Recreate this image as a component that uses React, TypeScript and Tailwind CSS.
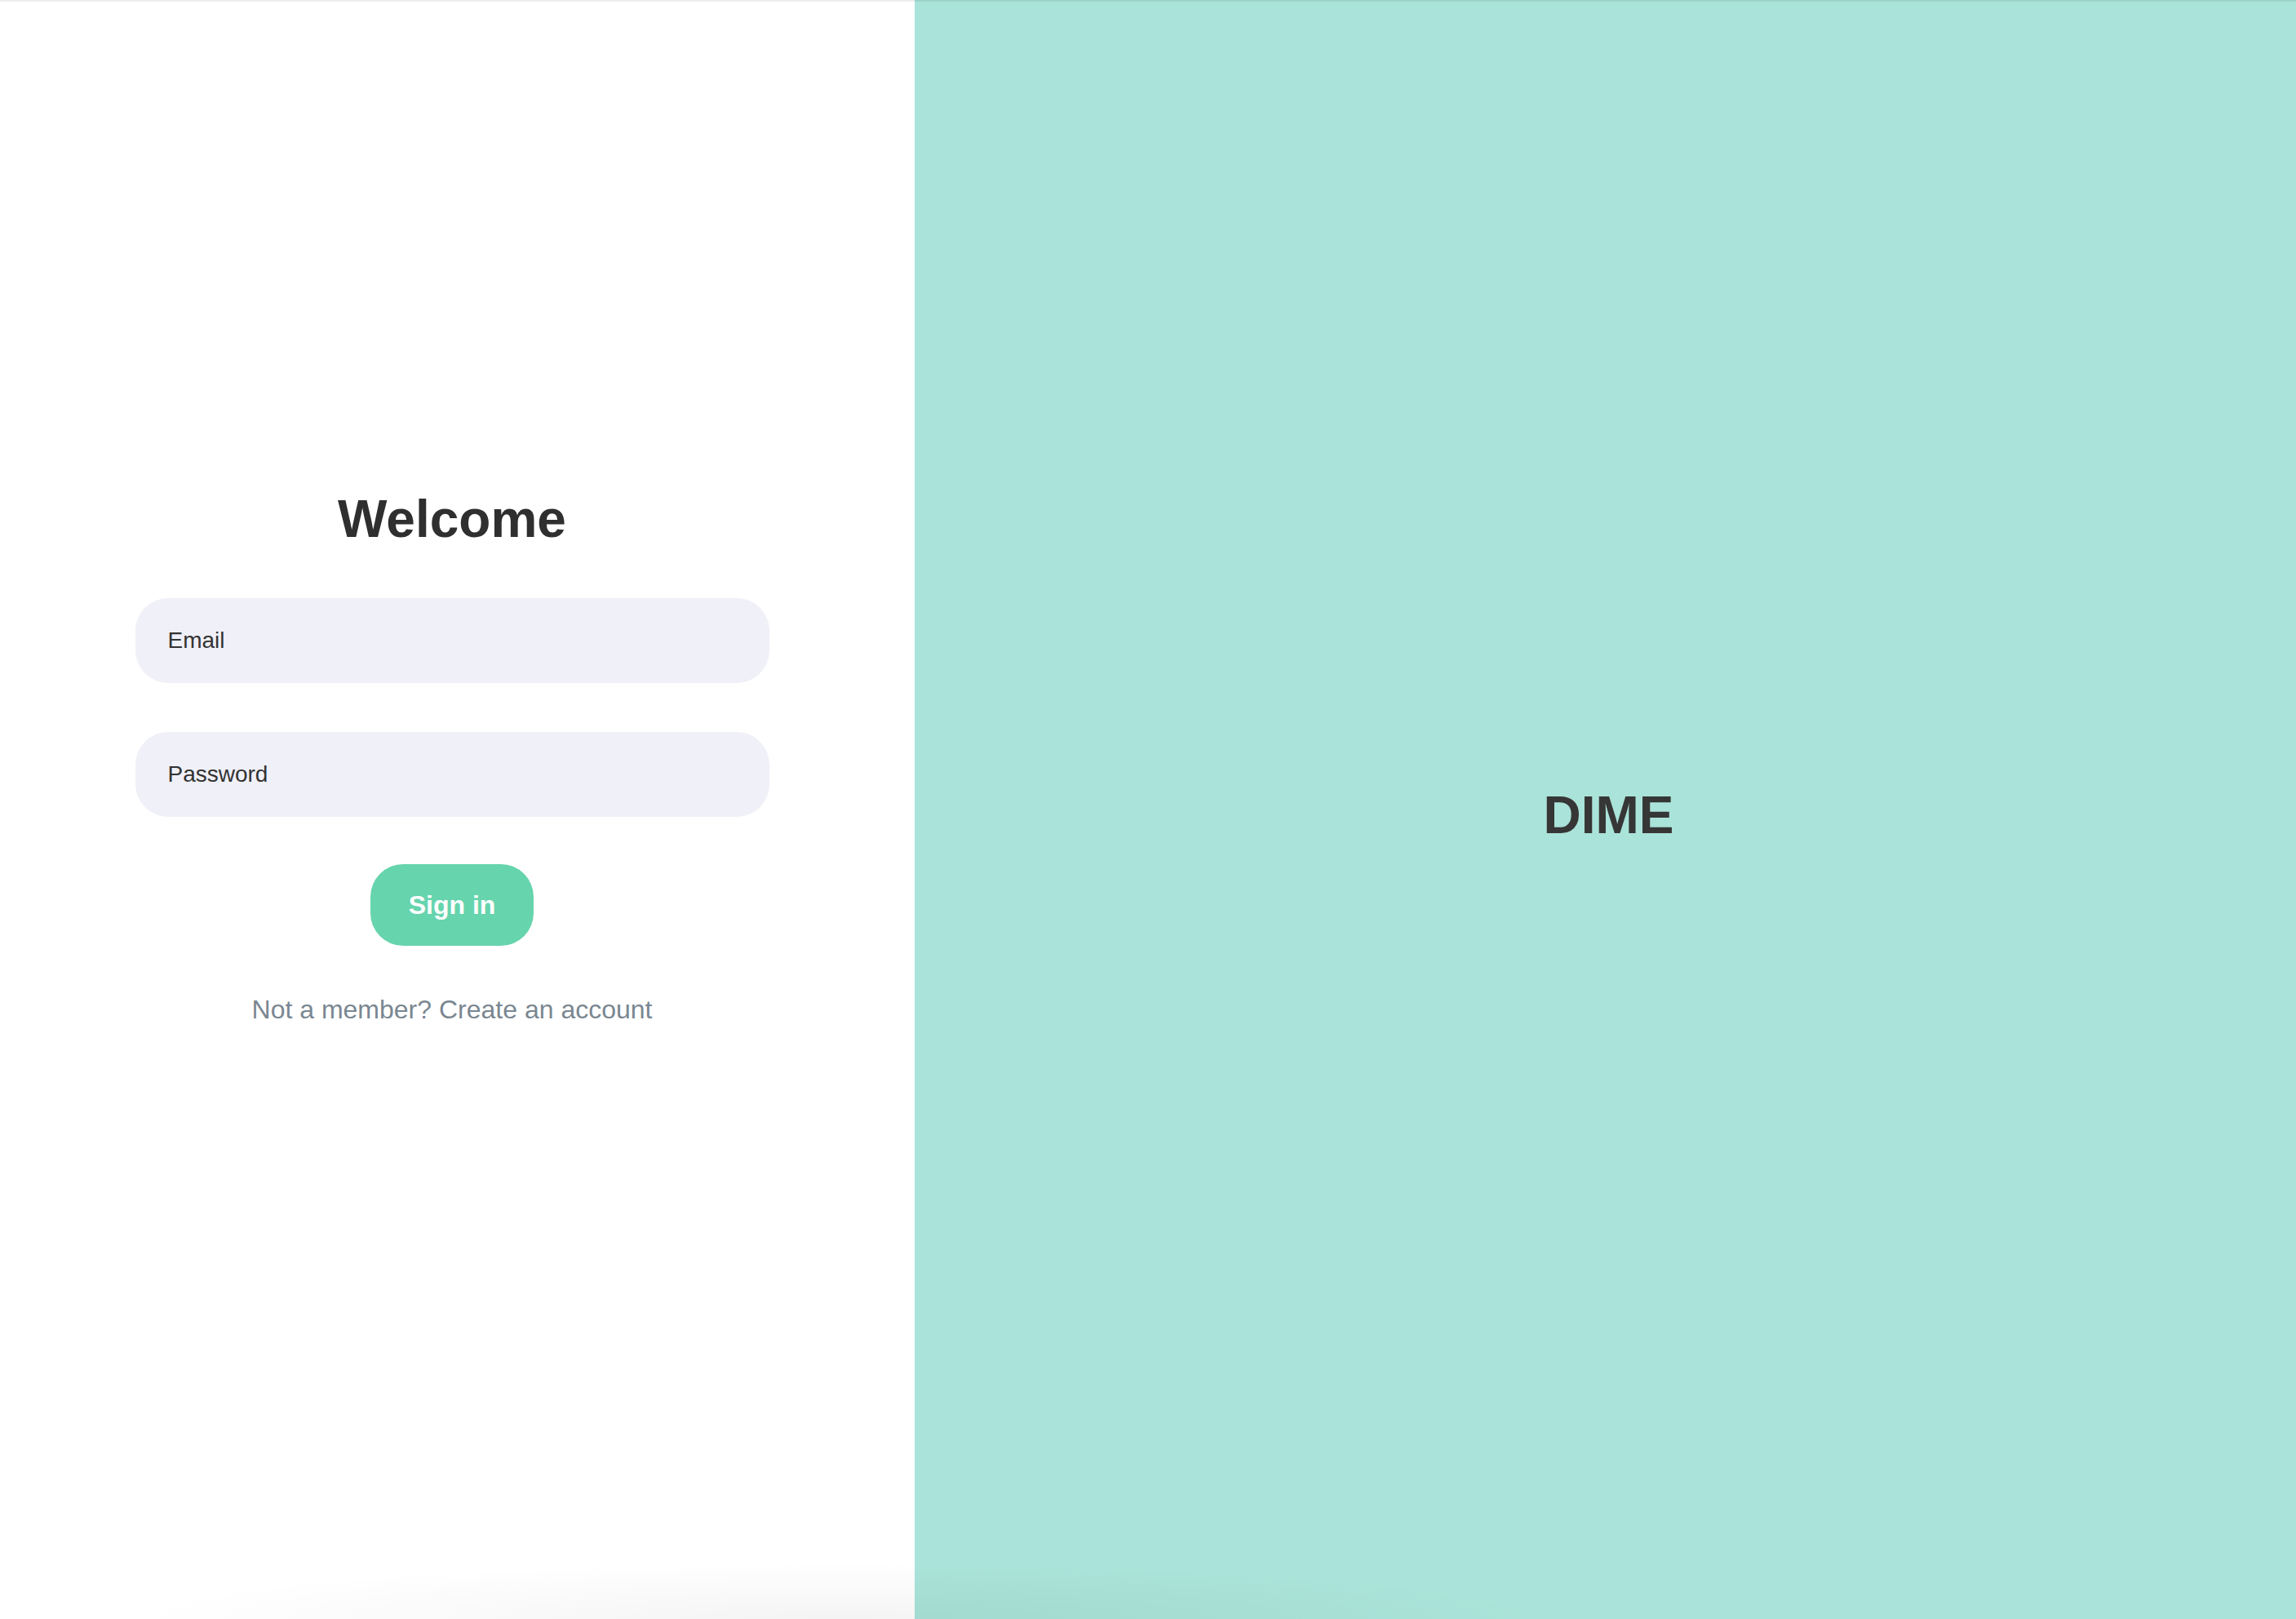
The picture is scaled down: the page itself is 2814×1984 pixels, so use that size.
export default function App() {
    return (
        <div className="relative flex h-[1984px] w-full overflow-hidden font-['Liberation_Sans',Arial,sans-serif] text-[#333333]">
            {/* Left: sign in form */}
            <div className="w-[1121px] shrink-0 bg-white">
                <div className="flex flex-col items-center gap-[60px] pt-[599px] pr-[13px]">
                    <h1 className="text-[64px] font-bold leading-[74px] text-[#2f2f2f]">Welcome</h1>
                    <input
                        type="email"
                        placeholder="Email"
                        className="h-[104px] w-[777px] rounded-[40px] bg-[#f0f0f8] px-[40px] text-[28px] text-[#333333] outline-none placeholder:text-[#333333]"
                    />
                    <input
                        type="password"
                        placeholder="Password"
                        className="h-[104px] w-[777px] rounded-[40px] bg-[#f0f0f8] px-[40px] text-[28px] text-[#333333] outline-none placeholder:text-[#333333]"
                    />
                    <button className="-mt-[2px] h-[100px] w-[200px] rounded-[40px] bg-[#66d4ad] text-[32px] font-bold text-white">
                        Sign in
                    </button>
                    <p className="text-[32px] leading-[37px] text-[#7a8791]">Not a member? Create an account</p>
                </div>
            </div>

            {/* Right: brand */}
            <div className="flex flex-1 items-center justify-center bg-[#aae3d9] pt-[14px] pl-[8px]">
                <h2 className="text-[64px] font-bold leading-[74px] text-[#363636]">DIME</h2>
            </div>

            {/* top hairline + bottom shadow */}
            <div className="pointer-events-none absolute inset-x-0 top-0 h-[2px] bg-black/[0.07]" />
            <div className="pointer-events-none absolute bottom-0 left-[140px] h-[70px] w-[1780px] bg-[radial-gradient(ellipse_at_bottom,rgba(0,0,0,0.045),rgba(0,0,0,0)_70%)]" />
        </div>
    );
}
